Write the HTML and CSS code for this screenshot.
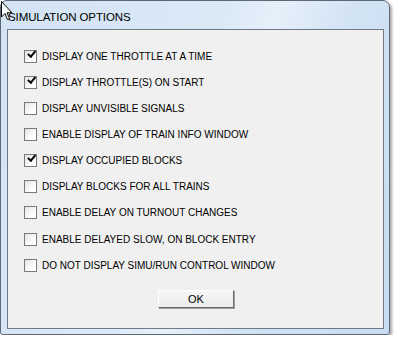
FILE: index.html
```html
<!DOCTYPE html>
<html lang="en">
<head>
    <meta charset="UTF-8">
    <title>Simulation Options</title>
    <link rel="stylesheet" href="styles.css">
</head>
<body>
  <div class="window">
    <div class="titlebar">SIMULATION OPTIONS</div>
    <div class="client">
      <ul class="options">
        <li><span class="box checked"></span>DISPLAY ONE THROTTLE AT A TIME</li>
        <li><span class="box checked"></span>DISPLAY THROTTLE(S) ON START</li>
        <li><span class="box"></span>DISPLAY UNVISIBLE SIGNALS</li>
        <li><span class="box"></span>ENABLE DISPLAY OF TRAIN INFO WINDOW</li>
        <li><span class="box checked"></span>DISPLAY OCCUPIED BLOCKS</li>
        <li><span class="box"></span>DISPLAY BLOCKS FOR ALL TRAINS</li>
        <li><span class="box"></span>ENABLE DELAY ON TURNOUT CHANGES</li>
        <li><span class="box"></span>ENABLE DELAYED SLOW, ON BLOCK ENTRY</li>
        <li><span class="box"></span>DO NOT DISPLAY SIMU/RUN CONTROL WINDOW</li>
      </ul>
      <div class="actions">
        <button class="btn">OK</button>
      </div>
    </div>
  </div>

  <!-- mouse pointer over the title -->
  <svg class="cursor" width="14" height="22" viewBox="0 0 14 22">
    <path d="M1.5 1.5 L1.5 17 L5 13.5 L7.5 19.5 L9.5 18.5 L7 12.8 L12 12.8 Z" fill="#fff" stroke="#000" stroke-width="1"/>
  </svg>
</body>
</html>
```

FILE: styles.css
```css
body {
  margin: 0;
  background: #ffffff;
  font-family: "Liberation Sans", Arial, sans-serif;
}

.window {
  position: relative;
  width: 390px;
  height: 335px;
  box-sizing: border-box;
  border: 1px solid #5d6877;
  border-radius: 7px 7px 3px 3px;
  background: linear-gradient(110deg, #d3e3f4 0%, #dbe9f7 45%, #e6f0fa 55%, #d2e3f4 70%, #c9dcf1 100%);
  box-shadow: 2px 2px 3px rgba(0, 0, 0, 0.35);
  padding: 0 5px 5px 6px;
  display: flex;
  flex-direction: column;
}

.titlebar {
  height: 28px;
  line-height: 32px;
  font-size: 11.5px;
  letter-spacing: -0.1px;
  color: #000;
  padding-left: 1px;
}

.client {
  flex: 1;
  background: #f0f0f0;
  border: 1px solid #6f7a86;
  display: flex;
  flex-direction: column;
}

.options {
  list-style: none;
  margin: 0;
  padding: 13px 0 0 16px;
}

.options li {
  height: 26.15px;
  display: flex;
  align-items: center;
  font-size: 10px;
  color: #000;
}

.box {
  width: 11px;
  height: 11px;
  border: 1px solid #7a7a7a;
  background: linear-gradient(135deg, #e2e2e2, #ffffff 70%);
  margin-right: 5px;
  flex-shrink: 0;
  position: relative;
}

.box.checked::after {
  content: "";
  position: absolute;
  left: 1px;
  top: -1px;
  width: 3px;
  height: 6px;
  border: solid #000;
  border-width: 0 2px 2px 0;
  transform: rotate(40deg);
  transform-origin: 100% 100%;
}

.actions {
  display: flex;
  justify-content: center;
  padding-top: 12px;
}

.btn {
  width: 76px;
  height: 18px;
  margin-left: 1px;
  padding: 0;
  font-family: "Liberation Sans", Arial, sans-serif;
  font-size: 11px;
  color: #000;
  background: linear-gradient(#f6f6f6, #ebebeb);
  border: 1px solid;
  border-color: #ffffff #6a6a6a #6a6a6a #ffffff;
  box-shadow: 1px 1px 0 #a0a0a0;
}

.cursor {
  position: absolute;
  left: 0;
  top: 0;
}
```
